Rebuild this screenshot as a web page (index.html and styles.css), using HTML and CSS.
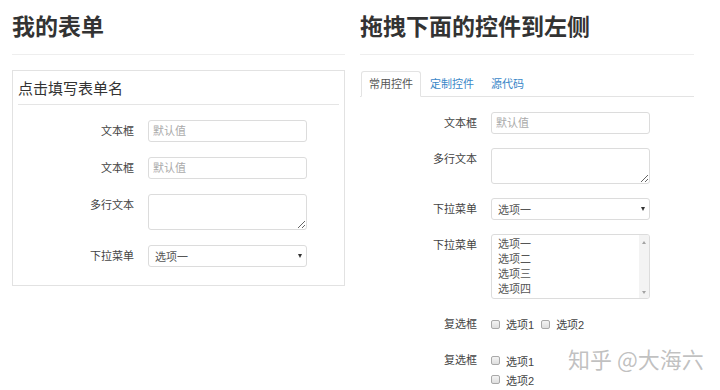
FILE: index.html
```html
<!DOCTYPE html>
<html lang="zh-CN">
<head>
<meta charset="utf-8">
<title>表单设计器</title>
<link rel="stylesheet" href="styles.css">
</head>
<body>
<div class="page">
  <section class="col">
    <h1 class="heading">我的表单</h1>
    <div class="rule"></div>
    <div class="form-box">
      <div class="legend">点击填写表单名</div>
      <div class="form-grid">
        <label class="lbl">文本框</label><input class="ctl" placeholder="默认值">
        <label class="lbl">文本框</label><input class="ctl" placeholder="默认值">
        <label class="lbl">多行文本</label><textarea class="ctl area"></textarea>
        <label class="lbl">下拉菜单</label><div class="ctl sel"><span>选项一</span><span class="caret"></span></div>
      </div>
    </div>
  </section>
  <section class="col">
    <h1 class="heading">拖拽下面的控件到左侧</h1>
    <div class="rule"></div>
    <ul class="tabs">
      <li class="tab active">常用控件</li>
      <li class="tab">定制控件</li>
      <li class="tab">源代码</li>
    </ul>
    <div class="form-grid right">
      <label class="lbl">文本框</label><input class="ctl" placeholder="默认值">
      <label class="lbl">多行文本</label><textarea class="ctl area"></textarea>
      <label class="lbl">下拉菜单</label><div class="ctl sel"><span>选项一</span><span class="caret"></span></div>
      <label class="lbl">下拉菜单</label>
      <div class="ctl multi">
        <div class="opts">
          <div>选项一</div><div>选项二</div><div>选项三</div><div>选项四</div>
        </div>
        <div class="sbar"><span class="up"></span><span class="down"></span></div>
      </div>
      <label class="lbl">复选框</label>
      <div class="checks inline">
        <span class="chk"><span class="box"></span>选项1</span>
        <span class="chk"><span class="box"></span>选项2</span>
      </div>
      <label class="lbl">复选框</label>
      <div class="checks stack">
        <span class="chk"><span class="box"></span>选项1</span>
        <span class="chk"><span class="box"></span>选项2</span>
      </div>
    </div>
  </section>
</div>
<div class="watermark">知乎 @大海六</div>
</body>
</html>
```
FILE: styles.css
```css
body {
  margin: 0;
  background: #fff;
  color: #333;
  font-family: "Liberation Sans", "Noto Sans CJK SC", sans-serif;
}
.page {
  display: grid;
  grid-template-columns: 333px 334px;
  column-gap: 15px;
  padding-left: 12px;
}
.heading {
  margin: 0;
  padding-top: 12px;
  font-family: "Noto Sans CJK SC", sans-serif;
  font-size: 23px;
  line-height: 26px;
  font-weight: bold;
  color: #333;
}
.rule {
  margin-top: 16px;
  border-top: 1px solid #eee;
}
.form-box {
  margin-top: 15px;
  border: 1px solid #e2e2e2;
  padding: 0 5px 18px;
}
.legend {
  padding-top: 7px;
  padding-bottom: 6px;
  font-family: "Noto Sans CJK SC", sans-serif;
  font-size: 15px;
  line-height: 20px;
  color: #333;
  border-bottom: 1px solid #e5e5e5;
}
.form-grid {
  display: grid;
  grid-template-columns: 116px 159px;
  column-gap: 14px;
  row-gap: 15px;
  margin-top: 15px;
  align-items: start;
}
.form-grid.right {
  grid-template-columns: 117px 159px;
  row-gap: 14px;
}
.lbl {
  font-size: 11px;
  line-height: 22px;
  text-align: right;
  color: #444;
}
.ctl {
  box-sizing: border-box;
  width: 159px;
  height: 22px;
  margin: 0;
  border: 1px solid #dcdcdc;
  border-radius: 3px;
  padding: 0 4px;
  background: #fff;
  font-family: "Liberation Sans", "Noto Sans CJK SC", sans-serif;
  font-size: 11px;
  color: #555;
  outline: none;
}
.ctl::placeholder {
  color: #aaa;
}
.area {
  height: 36px;
  resize: vertical;
}
.sel {
  display: flex;
  align-items: center;
  justify-content: space-between;
  padding: 0 4px 0 6px;
}
.caret {
  width: 0;
  height: 0;
  border-left: 2.5px solid transparent;
  border-right: 2.5px solid transparent;
  border-top: 4px solid #333;
}
.multi {
  height: 65px;
  display: flex;
  padding: 0;
}
.opts {
  flex: 1;
  padding: 2px 6px;
  line-height: 15px;
  color: #555;
}
.sbar {
  width: 10px;
  background: #f3f3f3;
  display: flex;
  flex-direction: column;
  justify-content: space-between;
  align-items: center;
  padding: 6px 0 4px;
  border-radius: 0 2px 2px 0;
}
.up {
  width: 0;
  height: 0;
  border-left: 2.5px solid transparent;
  border-right: 2.5px solid transparent;
  border-bottom: 3px solid #a3a3a3;
}
.down {
  width: 0;
  height: 0;
  border-left: 2.5px solid transparent;
  border-right: 2.5px solid transparent;
  border-top: 3px solid #a3a3a3;
}
.tabs {
  list-style: none;
  margin: 16px 0 0;
  padding: 0 0 0 1px;
  display: flex;
  border-bottom: 1px solid #e3e3e3;
}
.tab {
  padding: 0 7px;
  margin: 0 1px -1px 0;
  line-height: 24px;
  font-size: 11px;
  color: #3a87c8;
  border: 1px solid transparent;
  border-radius: 3px 3px 0 0;
}
.tab.active {
  color: #555;
  background: #fff;
  border-color: #e3e3e3 #e3e3e3 transparent;
}
.checks {
  font-size: 11px;
  color: #444;
}
.checks.inline {
  display: flex;
  align-items: center;
  height: 22px;
}
.checks.stack {
  display: flex;
  flex-direction: column;
  padding-top: 2px;
}
.checks.stack .chk {
  height: 19px;
}
.chk {
  display: inline-flex;
  align-items: center;
  margin-right: 7px;
}
.box {
  box-sizing: border-box;
  width: 9px;
  height: 9px;
  margin-right: 6px;
  border: 1px solid #a9a9a9;
  border-radius: 2px;
  background: linear-gradient(#f4f4f4, #dedede);
}
.watermark {
  position: absolute;
  left: 568px;
  top: 341px;
  font-family: "Noto Sans CJK SC", sans-serif;
  font-size: 22px;
  line-height: 34px;
  color: rgba(140, 140, 140, 0.55);
  white-space: nowrap;
}
```
